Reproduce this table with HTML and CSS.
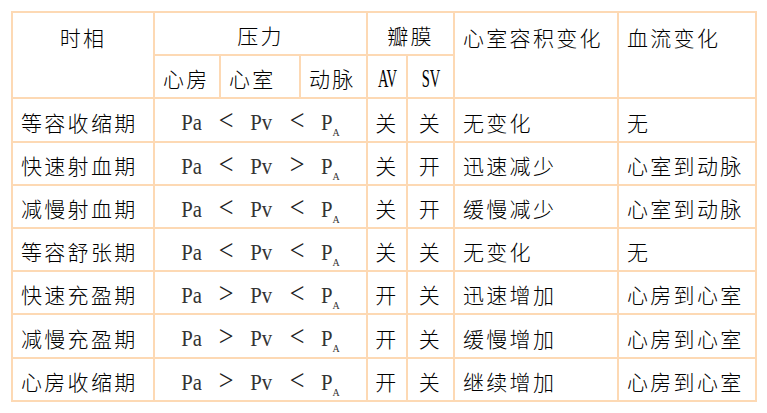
FILE: index.html
```html
<!DOCTYPE html>
<html lang="zh-CN">
<head>
<meta charset="utf-8">
<title>心动周期</title>
<link rel="stylesheet" href="styles.css">
</head>
<body>
<table class="grid">
  <colgroup>
    <col class="w-phase">
    <col class="w-atrium">
    <col class="w-ventricle">
    <col class="w-artery">
    <col class="w-av">
    <col class="w-sv">
    <col class="w-volume">
    <col class="w-flow">
  </colgroup>
  <thead>
    <tr class="row">
      <th rowspan="2" class="top center">时相</th>
      <th colspan="3" class="center">压力</th>
      <th colspan="2" class="center">瓣膜</th>
      <th rowspan="2" class="top">心室容积变化</th>
      <th rowspan="2" class="top">血流变化</th>
    </tr>
    <tr class="row">
      <th>心房</th>
      <th>心室</th>
      <th>动脉</th>
      <th class="center"><span class="narrow">AV</span></th>
      <th class="center"><span class="narrow">SV</span></th>
    </tr>
  </thead>
  <tbody>
    <tr class="row tall">
      <td>等容收缩期</td>
      <td colspan="3"><div class="expr"><span>Pa</span><span class="op">&lt;</span><span>Pv</span><span class="op">&lt;</span><span>P<sub>A</sub></span></div></td>
      <td class="center">关</td>
      <td class="center">关</td>
      <td>无变化</td>
      <td>无</td>
    </tr>
    <tr class="row">
      <td>快速射血期</td>
      <td colspan="3"><div class="expr"><span>Pa</span><span class="op">&lt;</span><span>Pv</span><span class="op">&gt;</span><span>P<sub>A</sub></span></div></td>
      <td class="center">关</td>
      <td class="center">开</td>
      <td>迅速减少</td>
      <td>心室到动脉</td>
    </tr>
    <tr class="row">
      <td>减慢射血期</td>
      <td colspan="3"><div class="expr"><span>Pa</span><span class="op">&lt;</span><span>Pv</span><span class="op">&lt;</span><span>P<sub>A</sub></span></div></td>
      <td class="center">关</td>
      <td class="center">开</td>
      <td>缓慢减少</td>
      <td>心室到动脉</td>
    </tr>
    <tr class="row">
      <td>等容舒张期</td>
      <td colspan="3"><div class="expr"><span>Pa</span><span class="op">&lt;</span><span>Pv</span><span class="op">&lt;</span><span>P<sub>A</sub></span></div></td>
      <td class="center">关</td>
      <td class="center">关</td>
      <td>无变化</td>
      <td>无</td>
    </tr>
    <tr class="row">
      <td>快速充盈期</td>
      <td colspan="3"><div class="expr"><span>Pa</span><span class="op">&gt;</span><span>Pv</span><span class="op">&lt;</span><span>P<sub>A</sub></span></div></td>
      <td class="center">开</td>
      <td class="center">关</td>
      <td>迅速增加</td>
      <td>心房到心室</td>
    </tr>
    <tr class="row tall">
      <td>减慢充盈期</td>
      <td colspan="3"><div class="expr"><span>Pa</span><span class="op">&gt;</span><span>Pv</span><span class="op">&lt;</span><span>P<sub>A</sub></span></div></td>
      <td class="center">开</td>
      <td class="center">关</td>
      <td>缓慢增加</td>
      <td>心房到心室</td>
    </tr>
    <tr class="row">
      <td>心房收缩期</td>
      <td colspan="3"><div class="expr"><span>Pa</span><span class="op">&gt;</span><span>Pv</span><span class="op">&lt;</span><span>P<sub>A</sub></span></div></td>
      <td class="center">开</td>
      <td class="center">关</td>
      <td>继续增加</td>
      <td>心房到心室</td>
    </tr>
  </tbody>
</table>
</body>
</html>
```

FILE: styles.css
```css
html, body {
  margin: 0;
  padding: 0;
  background: #ffffff;
}

body {
  color: #000000;
  font-family: "Noto Sans CJK SC", "Noto Sans", sans-serif;
}

.grid {
  margin: 11px 0 0 11px;
  width: 744px;
  table-layout: fixed;
  border-collapse: collapse;
}

.w-phase { width: 142px; }
.w-atrium { width: 66px; }
.w-ventricle { width: 80px; }
.w-artery { width: 67px; }
.w-av { width: 40px; }
.w-sv { width: 47px; }
.w-volume { width: 164px; }
.w-flow { width: 138px; }

.grid th,
.grid td {
  border: 2px solid #fdd9b4;
  padding: 3px 0 0 8px;
  font-size: 21px;
  font-weight: 300;
  letter-spacing: 2.3px;
  line-height: 24px;
  text-align: left;
  vertical-align: middle;
  white-space: nowrap;
  overflow: hidden;
}

.row { height: 43px; }
.row.tall { height: 44px; }

.grid .center {
  text-align: center;
  padding-left: 0;
}

.grid .top {
  vertical-align: top;
  padding-top: 12px;
}

.narrow {
  display: inline-block;
  font-family: "Liberation Serif", serif;
  font-size: 25px;
  font-weight: 400;
  letter-spacing: 0;
  transform: scaleX(0.58);
}

.grid td[colspan] {
  padding-left: 0;
}

.expr {
  display: flex;
  justify-content: center;
  align-items: baseline;
  gap: 15px;
  font-family: "Liberation Serif", serif;
  font-size: 23px;
  font-weight: 400;
  letter-spacing: 0;
  color: #333333;
}

.expr span {
  display: inline-block;
  transform: scaleX(0.9);
}

.expr .op {
  font-size: 29px;
  color: #222222;
}

.expr sub {
  font-size: 11px;
  vertical-align: -6px;
  line-height: 0;
}
```
